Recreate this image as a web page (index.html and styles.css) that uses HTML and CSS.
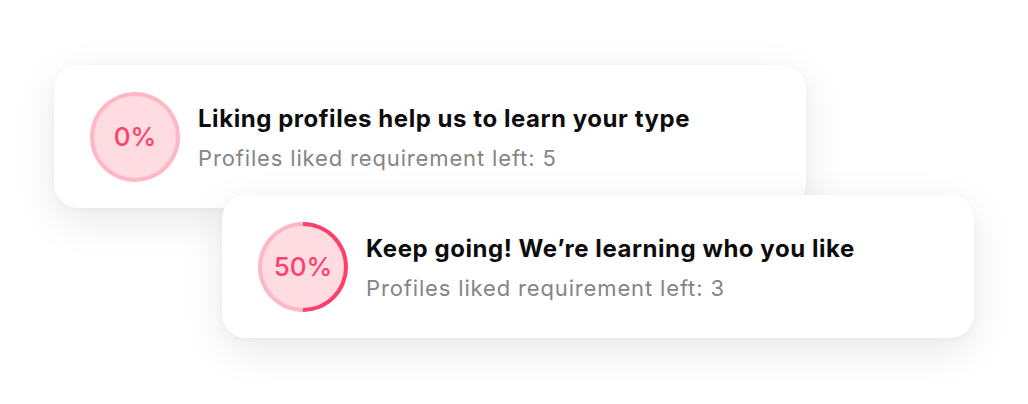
FILE: index.html
```html
<!DOCTYPE html>
<html>
<head>
<meta charset="utf-8">
<link rel="stylesheet" href="styles.css">
</head>
<body>
<main class="stack">
  <section class="card card-first">
    <div class="ring ring-0">
      <div class="ring-inner">0%</div>
    </div>
    <div class="copy">
      <h2 class="title">Liking profiles help us to learn your type</h2>
      <p class="sub">Profiles liked requirement left: 5</p>
    </div>
  </section>
  <section class="card card-second">
    <div class="ring ring-50">
      <div class="ring-inner">50%</div>
    </div>
    <div class="copy">
      <h2 class="title">Keep going! We’re learning who you like</h2>
      <p class="sub">Profiles liked requirement left: 3</p>
    </div>
  </section>
</main>
</body>
</html>
```
FILE: styles.css
```css
html, body {
  margin: 0;
  padding: 0;
  background: #ffffff;
}
body {
  width: 1028px;
  height: 404px;
  overflow: hidden;
  font-family: Inter, "Noto Sans", sans-serif;
}
.stack {
  display: flex;
  flex-direction: column;
  padding-top: 65px;
}
.card {
  box-sizing: border-box;
  width: 752px;
  height: 143px;
  background: #ffffff;
  border-radius: 24px;
  box-shadow: 0 12px 44px rgba(0, 0, 0, 0.09), 0 2px 10px rgba(0, 0, 0, 0.03);
  display: flex;
  align-items: center;
  padding-left: 36px;
  gap: 18px;
}
.card-first {
  margin-left: 54px;
}
.card-second {
  margin-left: 222px;
  margin-top: -13px;
}
.ring {
  box-sizing: border-box;
  width: 90px;
  height: 90px;
  flex: 0 0 90px;
  border-radius: 50%;
  padding: 4px;
  background: #ffb6c5;
}
.ring-50 {
  background: conic-gradient(#ff3e6b 0 50%, #ffb6c5 50% 100%);
}
.ring-inner {
  width: 100%;
  height: 100%;
  border-radius: 50%;
  background: #ffdbe2;
  display: flex;
  align-items: center;
  justify-content: center;
  color: #ff3e6b;
  font-size: 26px;
  font-weight: 500;
  letter-spacing: 0;
}
.copy {
  display: flex;
  flex-direction: column;
  gap: 10px;
  padding-top: 2px;
}
.title {
  margin: 0;
  font-size: 24px;
  line-height: 30px;
  font-weight: 700;
  letter-spacing: 0.55px;
  color: #0d0d0d;
}
.sub {
  margin: 0;
  font-size: 22px;
  line-height: 28px;
  font-weight: 400;
  letter-spacing: 0.85px;
  color: #858585;
}
```
